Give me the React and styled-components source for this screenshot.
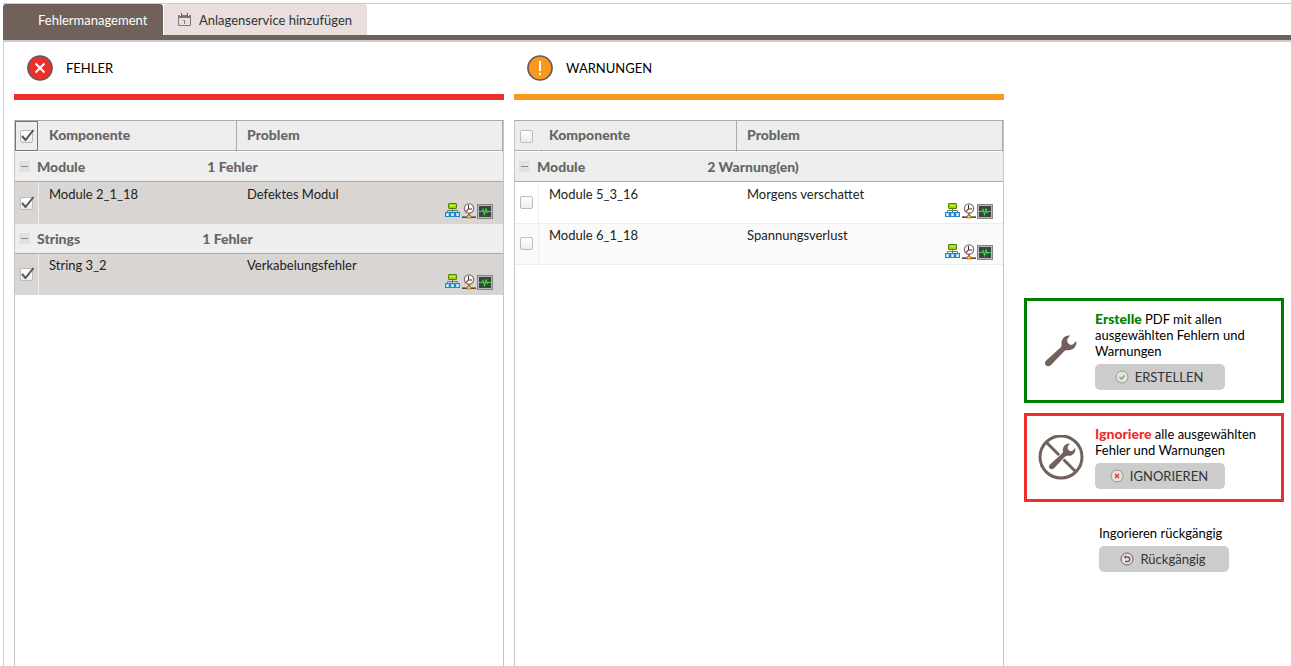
import React, { useState } from 'react'
import styled, { createGlobalStyle, css } from 'styled-components'

const GlobalStyle = createGlobalStyle`
  *, *::before, *::after {
    box-sizing: border-box;
  }

  body {
    margin: 0;
    background: #fff;
    color: #000;
    font-family: Lato, 'Liberation Sans', sans-serif;
    font-size: 13px;
    line-height: 16px;
  }

  button {
    font: inherit;
    cursor: pointer;
  }
`

const BROWN = '#70625a'
const RED = '#ee2e2a'
const ORANGE = '#f8981d'
const GREEN = '#008000'

const Page = styled.div`
  display: flex;
  flex-direction: column;
  height: 100vh;
  padding: 3px 0 0 3px;
  overflow: hidden;
`

const TabBar = styled.nav`
  display: flex;
  gap: 1px;
  border-top: 1px solid #ccc;
  border-bottom: 5px solid ${BROWN};
`

const Tab = styled.button`
  display: flex;
  align-items: center;
  gap: 8px;
  min-width: ${({ $active }) => ($active ? 160 : 203)}px;
  height: 31px;
  padding: 0 12px 0 ${({ $active }) => ($active ? 35 : 14)}px;
  border: 0;
  border-radius: 3px 3px 0 0;
  background: ${({ $active }) => ($active ? BROWN : '#e8dfde')};
  color: ${({ $active }) => ($active ? '#fff' : '#333')};
`

const Content = styled.main`
  flex: 1;
  display: grid;
  grid-template-columns: 1fr 1fr 270px;
  gap: 10px;
  min-height: 0;
  padding: 0 7px 0 10px;
  border-top: 2px solid #ccc;
  border-left: 1px solid #ccc;
`

const Column = styled.section`
  display: flex;
  flex-direction: column;
  min-width: 0;
`

const ColumnTitle = styled.h2`
  display: flex;
  align-items: center;
  gap: 13px;
  height: 58px;
  margin: 0 0 20px;
  padding: 0 0 0 13px;
  border-bottom: 6px solid ${({ $color }) => $color};
  font-size: 13px;
  font-weight: normal;
`

const TableBox = styled.div`
  flex: 1;
  border: 1px solid #c6c6c6;
  border-top-color: #aaa;
  border-bottom: 0;
`

const Table = styled.table`
  width: 100%;
  table-layout: fixed;
  border-collapse: separate;
  border-spacing: 0;
`

const Head = styled.th`
  width: ${({ $width }) => $width || 'auto'};
  height: 31px;
  padding: 0 10px 2px;
  border-right: 1px solid #aaa;
  border-bottom: 1px solid #fff;
  box-shadow: inset 0 -1px #aaa;
  background: #ededed;
  color: #666;
  font-size: 14px;
  font-weight: 900;
  text-align: left;
`

const CheckHead = styled(Head)`
  padding: 0 0 0 5px;
  border-right-color: #ededed;

  ${({ $checked }) =>
    $checked &&
    css`
      box-shadow: inset 0 0 0 1px #7d726b;
    `}
`

const GroupCell = styled.td`
  height: 30px;
  padding: 0 4px;
  border-bottom: 1px solid #aaa;
  background: #eee;
  color: #666;
  font-size: 14px;
  font-weight: 900;
`

const GroupLine = styled.div`
  display: flex;
  align-items: center;
  gap: 7px;
`

const Count = styled.span`
  margin-left: 115px;
`

const Toggle = styled.button`
  display: grid;
  place-items: center;
  width: 11px;
  height: 11px;
  padding: 0;
  border: 0;
  background: #dfe1e6;

  &::before {
    content: '';
    width: 7px;
    height: 1px;
    background: #888;
  }
`

const Row = styled.tr`
  td {
    height: 41px;
    padding: 3px 10px;
    border-bottom: ${({ $checked }) => ($checked ? 0 : '1px solid #ededed')};
    background: ${({ $checked, $odd }) => ($checked ? '#d9d5d2' : $odd ? '#fafafa' : '#fff')};
    color: #222;
    vertical-align: top;
  }

  thead + tbody > &:nth-child(2) td {
    height: 42px;
    border-top: 1px solid transparent;
  }

  && td:first-child {
    padding: 0 0 2px 5px;
    border-right: 1px solid #ededed;
    vertical-align: middle;
  }
`

const Problem = styled.div`
  display: flex;
  justify-content: space-between;
`

const Actions = styled.span`
  display: flex;
  padding-top: 17px;
`

const CheckLabel = styled.label`
  display: grid;
  width: 16px;
  cursor: pointer;

  & > * {
    grid-area: 1 / 1;
  }

  svg {
    pointer-events: none;
  }
`

const CheckInput = styled.input`
  appearance: none;
  width: 13px;
  height: 13px;
  margin: 2px 0 1px;
  border: 1px solid #bbb;
  border-radius: 2px;
  background: linear-gradient(#fff, #ececec);
`

const Side = styled.aside`
  padding: 256px 0 0 10px;
`

const ActionBox = styled.section`
  display: grid;
  grid-template-columns: 68px 1fr;
  align-items: center;
  margin-bottom: 10px;
  padding: 10px 10px 10px 0;
  border: 3px solid ${({ $color }) => $color};

  & > svg {
    justify-self: center;
  }
`

const Text = styled.p`
  margin: 0 0 5px;
`

const Strong = styled.strong`
  color: ${({ $color }) => $color};
  font-size: 14px;
  font-weight: 900;
  line-height: 1;
`

const Button = styled.button`
  display: flex;
  align-items: center;
  justify-content: center;
  gap: 6px;
  width: 130px;
  height: 26px;
  padding: 0 2px 0 0;
  border: 0;
  border-radius: 5px;
  background: #ccc;
  color: #333;
`

const Undo = styled.section`
  padding: 13px 0 0 75px;
`

function CalendarIcon() {
  return (
    <svg width="13" height="13" viewBox="0 0 13 13">
      <path d="M.5 2.5h12v10H.5z" fill="none" stroke="#85776f" />
      <path d="M0 2h13v3H0z" fill="#85776f" />
      <path d="M3 0h1v4H3zM9 0h1v4H9z" fill="#5c504a" />
      <path d="M2 1h1v2H2zM10 1h1v2h-1z" fill="#fff" />
      <path d="M5.5 7.5h1V11" fill="none" stroke="#85776f" />
    </svg>
  )
}

function StatusIcon({ color, children }) {
  return (
    <svg width="26" height="26" viewBox="0 0 26 26">
      <circle cx="13" cy="13" r="12" fill={color} stroke="#625b58" strokeWidth="1.7" />
      {children}
    </svg>
  )
}

function NetworkIcon() {
  return (
    <svg width="16" height="16" viewBox="0 0 16 16">
      <path d="M7.5 6v3M2.5 9.500V7.500h10v2" fill="none" stroke="#777" />
      <rect x="3.500" y=".5" width="8" height="5" rx=".5" fill="#a4d400" stroke="#468a00" />
      <path d="M5 2h5v1H5z" fill="#d3ef6b" />
      {[0, 5, 10].map(x => (
        <g key={x}>
          <rect x={x + 0.5} y="9.500" width="4" height="4" fill="#9bd8f8" stroke="#2587c4" />
          <path d={`M${x + 2} 11h1v2h-1z`} fill="#fff" />
        </g>
      ))}
    </svg>
  )
}

function ClockIcon() {
  return (
    <svg width="16" height="16" viewBox="0 0 16 16">
      <path d="M8 10v3" stroke="#777" strokeWidth="2" />
      <circle cx="8" cy="5.500" r="4.600" fill="#fff" stroke="#777" strokeWidth="1.300" />
      <path d="M7.500 2v4H11" fill="none" stroke="#333" />
      <path d="M7.500 6L5 8.500" stroke="#e01b1b" strokeWidth="1.200" />
      <path d="M1 13h14v2H1z" fill="#4d4d4d" />
      <path d="M1 13h14v1H1z" fill="#888" />
      <rect x="6.500" y="12.500" width="3" height="2.500" fill="#ffc94a" stroke="#d9820f" />
    </svg>
  )
}

function MonitorIcon() {
  return (
    <svg width="16" height="16" viewBox="0 0 16 16">
      <path d="M0 1h16v15H0z" fill="#858585" />
      <path d="M1 2h14v13H1z" fill="#b9b9b9" />
      <path d="M2 3h12v11H2z" fill="#3f4241" />
      <path d="M2 8.500h3l1-2 1.500 5 1.500-6 1 4 1-1h3" fill="none" stroke="#2fe04a" strokeWidth="1.100" />
    </svg>
  )
}

const wrench =
  'M25 .5C20 0 16 4 16.500 9c.2 1.500 0 2.500-1 3.500L1.200 25.500C-.8 27.500-.2 29.500 1 30.500c1.500 1.300 3.500 1 5-.5L19 16.500c1-1 2.500-1.500 4-1.200 5.500.2 9-3.800 8.300-9.300L28 9.300c-1.500 1.200-4.500.2-5.300-1.800-.7-1.500-.7-3 .1-4z'

function WrenchIcon() {
  return (
    <svg width="32" height="32" viewBox="0 0 32 32">
      <path d={wrench} fill={BROWN} />
    </svg>
  )
}

function NoWrenchIcon() {
  return (
    <svg width="46" height="46" viewBox="0 1 46 46">
      <circle cx="23" cy="23" r="21" fill="none" stroke={BROWN} strokeWidth="3" />
      <path d="M8 8l30 30" stroke={BROWN} strokeWidth="3" />
      <g transform="translate(11 9) scale(.84)">
        <path d={wrench} fill={BROWN} stroke="#fff" strokeWidth="2" paintOrder="stroke" />
      </g>
    </svg>
  )
}

function ButtonIcon({ stroke = '#999', children }) {
  return (
    <svg width="14" height="14" viewBox="0 0 14 14">
      <circle cx="7" cy="7" r="6" fill="#e6e1de" stroke={stroke} />
      {children}
    </svg>
  )
}

function Checkbox({ label, checked, onChange }) {
  return (
    <CheckLabel>
      <CheckInput
        type="checkbox"
        aria-label={label}
        checked={checked}
        onChange={e => onChange(e.target.checked)}
      />
      {checked && (
        <svg width="16" height="16" viewBox="0 0 16 16">
          <path d="M2 8l3.500 4L13.500 2" fill="none" stroke="#555" strokeWidth="2" />
        </svg>
      )}
    </CheckLabel>
  )
}

function IssueTable({ groups, selected, onSelect }) {
  const [closed, setClosed] = useState([])
  const ids = groups.flatMap(group => group.items.map(item => item.name))
  const all = ids.every(id => selected.includes(id))

  const toggleGroup = name =>
    setClosed(closed.includes(name) ? closed.filter(n => n !== name) : [...closed, name])

  return (
    <TableBox>
      <Table>
        <thead>
          <tr>
            <CheckHead $width="24px" $checked={all}>
              <Checkbox label="Alle auswählen" checked={all} onChange={on => onSelect(on ? ids : [])} />
            </CheckHead>
            <Head $width="198px">Komponente</Head>
            <Head>Problem</Head>
          </tr>
        </thead>
        {groups.map(group => (
          <tbody key={group.name}>
            <tr>
              <GroupCell colSpan={3}>
                <GroupLine>
                  <Toggle aria-label={group.name} onClick={() => toggleGroup(group.name)} />
                  <span>{group.name}</span>
                  <Count>{group.count}</Count>
                </GroupLine>
              </GroupCell>
            </tr>
            {!closed.includes(group.name) &&
              group.items.map((item, i) => {
                const checked = selected.includes(item.name)
                return (
                  <Row key={item.name} $checked={checked} $odd={i % 2 === 1}>
                    <td>
                      <Checkbox
                        label={item.name}
                        checked={checked}
                        onChange={on =>
                          onSelect(on ? [...selected, item.name] : selected.filter(n => n !== item.name))
                        }
                      />
                    </td>
                    <td>{item.name}</td>
                    <td>
                      <Problem>
                        {item.problem}
                        <Actions>
                          <NetworkIcon />
                          <ClockIcon />
                          <MonitorIcon />
                        </Actions>
                      </Problem>
                    </td>
                  </Row>
                )
              })}
          </tbody>
        ))}
      </Table>
    </TableBox>
  )
}

const errors = [
  {
    name: 'Module',
    count: '1 Fehler',
    items: [{ name: 'Module 2_1_18', problem: 'Defektes Modul' }],
  },
  {
    name: 'Strings',
    count: '1 Fehler',
    items: [{ name: 'String 3_2', problem: 'Verkabelungsfehler' }],
  },
]

const warnings = [
  {
    name: 'Module',
    count: '2 Warnung(en)',
    items: [
      { name: 'Module 5_3_16', problem: 'Morgens verschattet' },
      { name: 'Module 6_1_18', problem: 'Spannungsverlust' },
    ],
  },
]

export default function App() {
  const [selectedErrors, setSelectedErrors] = useState(['Module 2_1_18', 'String 3_2'])
  const [selectedWarnings, setSelectedWarnings] = useState([])

  return (
    <Page>
      <GlobalStyle />
      <TabBar>
        <Tab $active>Fehlermanagement</Tab>
        <Tab>
          <CalendarIcon />
          Anlagenservice hinzufügen
        </Tab>
      </TabBar>
      <Content>
        <Column>
          <ColumnTitle $color={RED}>
            <StatusIcon color={RED}>
              <path d="M8.500 8.500l9 9M17.500 8.500l-9 9" stroke="#fff" strokeWidth="2" />
            </StatusIcon>
            FEHLER
          </ColumnTitle>
          <IssueTable groups={errors} selected={selectedErrors} onSelect={setSelectedErrors} />
        </Column>
        <Column>
          <ColumnTitle $color={ORANGE}>
            <StatusIcon color={ORANGE}>
              <path d="M13 6v10M13 18v2" stroke="#fff" strokeWidth="2" />
            </StatusIcon>
            WARNUNGEN
          </ColumnTitle>
          <IssueTable groups={warnings} selected={selectedWarnings} onSelect={setSelectedWarnings} />
        </Column>
        <Side>
          <ActionBox $color={GREEN}>
            <WrenchIcon />
            <div>
              <Text>
                <Strong $color={GREEN}>Erstelle</Strong> PDF mit allen ausgewählten Fehlern und Warnungen
              </Text>
              <Button>
                <ButtonIcon>
                  <path d="M4.500 7l2 2 3-3.500" fill="none" stroke="#4cb648" strokeWidth="1.200" />
                </ButtonIcon>
                ERSTELLEN
              </Button>
            </div>
          </ActionBox>
          <ActionBox $color={RED}>
            <NoWrenchIcon />
            <div>
              <Text>
                <Strong $color={RED}>Ignoriere</Strong> alle ausgewählten Fehler und Warnungen
              </Text>
              <Button>
                <ButtonIcon>
                  <path d="M5 5l4 4M9 5L5 9" stroke={RED} strokeWidth="1.300" />
                </ButtonIcon>
                IGNORIEREN
              </Button>
            </div>
          </ActionBox>
          <Undo>
            <Text>Ingorieren rückgängig</Text>
            <Button>
              <ButtonIcon stroke={BROWN}>
                <path d="M5 5h2.500a2 2 0 0 1 0 4.500H5" fill="none" stroke={BROWN} strokeWidth="1.500" />
                <path d="M6 3v4L3.500 5z" fill={BROWN} />
              </ButtonIcon>
              Rückgängig
            </Button>
          </Undo>
        </Side>
      </Content>
    </Page>
  )
}
